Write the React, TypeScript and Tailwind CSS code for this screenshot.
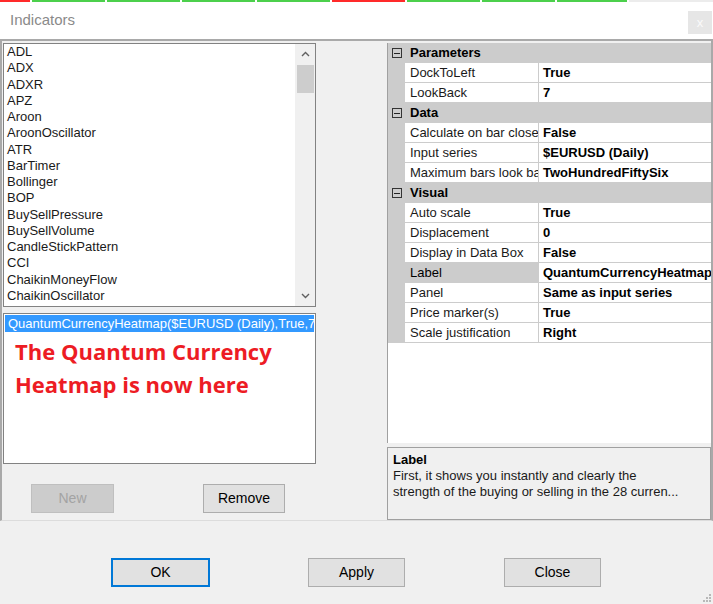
import React from "react";

const indicators = [
  "ADL",
  "ADX",
  "ADXR",
  "APZ",
  "Aroon",
  "AroonOscillator",
  "ATR",
  "BarTimer",
  "Bollinger",
  "BOP",
  "BuySellPressure",
  "BuySellVolume",
  "CandleStickPattern",
  "CCI",
  "ChaikinMoneyFlow",
  "ChaikinOscillator",
];

const sections: { title: string; rows: [string, string][] }[] = [
  {
    title: "Parameters",
    rows: [
      ["DockToLeft", "True"],
      ["LookBack", "7"],
    ],
  },
  {
    title: "Data",
    rows: [
      ["Calculate on bar close", "False"],
      ["Input series", "$EURUSD (Daily)"],
      ["Maximum bars look back", "TwoHundredFiftySix"],
    ],
  },
  {
    title: "Visual",
    rows: [
      ["Auto scale", "True"],
      ["Displacement", "0"],
      ["Display in Data Box", "False"],
      ["Label", "QuantumCurrencyHeatmap"],
      ["Panel", "Same as input series"],
      ["Price marker(s)", "True"],
      ["Scale justification", "Right"],
    ],
  },
];

// chart strip peeking above the dialog
const strip = [
  "w-[30px] bg-[#ff2a2a]",
  "w-[73px] bg-[#4cd04c]",
  "w-[73px] bg-[#4cd04c]",
  "w-[73px] bg-[#4cd04c]",
  "w-[73px] bg-[#4cd04c]",
  "w-[73px] bg-[#ff2a2a]",
  "w-[73px] bg-[#4cd04c]",
  "w-[73px] bg-[#4cd04c]",
  "w-[70px] bg-[#4cd04c]",
];

const Chevron = ({ up }: { up?: boolean }) => (
  <svg width="9" height="6" viewBox="0 0 9 6">
    <path
      d={up ? "M1 5 L4.5 1.5 L8 5" : "M1 1 L4.5 4.5 L8 1"}
      fill="none"
      stroke="#606060"
      strokeWidth="1.4"
    />
  </svg>
);

const MinusBox = () => (
  <div className="w-[10px] h-[10px] border border-[#333] flex items-center justify-center">
    <div className="w-[6px] h-px bg-[#222]" />
  </div>
);

const WinButton = ({
  label,
  disabled,
  focused,
  className = "",
}: {
  label: string;
  disabled?: boolean;
  focused?: boolean;
  className?: string;
}) => (
  <button
    type="button"
    className={`h-[29px] flex items-center justify-center text-[14px] ${
      disabled
        ? "bg-[#cccccc] border border-[#bfbfbf] text-[#a3a3a3]"
        : focused
        ? "bg-[#e1e1e1] border-2 border-[#0078d7] text-black"
        : "bg-[#e1e1e1] border border-[#adadad] text-black"
    } ${className}`}
  >
    {label}
  </button>
);

export default function App() {
  return (
    <div className="w-[713px] h-[604px] bg-white overflow-hidden font-['Liberation_Sans',Arial,sans-serif] text-[13px] text-[#1a1a1a]">
      <div className="flex h-[2px] gap-[2px]">
        {strip.map((c, i) => (
          <div key={i} className={c} />
        ))}
        <div className="flex-1 bg-[#ececec]" />
      </div>

      <div className="h-[37px] flex items-start justify-between pl-[10px]">
        <span className="mt-[7px] text-[15px] text-[#8a8a8a]">Indicators</span>
        <div className="mt-[9px] mr-[1px] w-[24px] h-[23px] bg-[#e6e6e6] flex items-center justify-center text-[13px] text-[#fafafa]">
          x
        </div>
      </div>

      <div className="h-[482px] flex bg-[#f0f0f0] border-t-2 border-l-2 border-r-2 border-[#a9a9a9] border-b border-b-[#dcdcdc]">
        <div className="ml-[1px] w-[313px] flex flex-col pt-[2px]">
          <div className="h-[264px] border border-[#828282] bg-white flex">
            <div className="flex-1 pl-[3px] leading-[16.25px] overflow-hidden">
              {indicators.map((n) => (
                <div key={n} className="whitespace-nowrap">
                  {n}
                </div>
              ))}
            </div>
            <div className="w-[20px] bg-[#f0f0f0] flex flex-col items-center">
              <div className="h-[20px] flex items-center justify-center">
                <Chevron up />
              </div>
              <div className="mt-[1px] w-[17px] h-[28px] bg-[#cdcdcd]" />
              <div className="flex-1" />
              <div className="h-[20px] flex items-center justify-center">
                <Chevron />
              </div>
            </div>
          </div>

          <div className="mt-[6px] h-[151px] border border-[#828282] bg-white p-px overflow-hidden">
            <div className="h-[17px] bg-[#3399ff] text-white whitespace-nowrap overflow-hidden pl-[3px] leading-[17px]">
              QuantumCurrencyHeatmap($EURUSD (Daily),True,7)
            </div>
            <div className="mt-[3px] pl-[10px] font-['Open_Sans',sans-serif] font-bold text-[22px] leading-[33px] text-[#ed1c24]">
              The Quantum Currency
              <br />
              Heatmap is now here
            </div>
          </div>

          <div className="mt-[20px] flex">
            <WinButton label="New" disabled className="ml-[28px] w-[83px] h-[28px]" />
            <WinButton label="Remove" className="ml-[89px] w-[82px] h-[28px]" />
          </div>
        </div>

        <div className="ml-[71px] w-[324px] flex flex-col pt-[2px]">
          <div className="h-[400px] border-l border-[#a0a0a0] bg-white overflow-hidden">
            {sections.map((s) => (
              <div key={s.title}>
                <div className="h-[20px] bg-[#cccccc] flex items-center">
                  <div className="ml-[4px]">
                    <MinusBox />
                  </div>
                  <span className="ml-[8px] font-bold text-black">{s.title}</span>
                </div>
                {s.rows.map(([name, value]) => (
                  <div key={name} className="h-[20px] flex bg-[#cccccc]">
                    <div
                      className={`ml-[17px] w-[133px] mb-px whitespace-nowrap overflow-hidden pl-[5px] leading-[19px] ${
                        name === "Label" ? "bg-[#cccccc] text-black" : "bg-white"
                      }`}
                    >
                      {name}
                    </div>
                    <div className="ml-px flex-1 mb-px bg-white whitespace-nowrap overflow-hidden pl-[4px] leading-[19px] font-bold text-black">
                      {value}
                    </div>
                  </div>
                ))}
              </div>
            ))}
          </div>

          <div className="mt-[4px] h-[73px] border border-[#a0a0a0] bg-[#f0f0f0] px-[5px] pt-[4px] leading-[16px]">
            <div className="font-bold text-black">Label</div>
            <div className="whitespace-nowrap overflow-hidden">
              First, it shows you instantly and clearly the
            </div>
            <div className="whitespace-nowrap overflow-hidden">
              strength of the buying or selling in the 28 curren...
            </div>
          </div>
        </div>
      </div>

      <div className="h-[83px] bg-[#f0f0f0] flex items-start pt-[37px] relative">
        <WinButton label="OK" focused className="ml-[111px] w-[99px]" />
        <WinButton label="Apply" className="ml-[98px] w-[97px]" />
        <WinButton label="Close" className="ml-[99px] w-[97px]" />
        <svg className="absolute right-[2px] bottom-[2px]" width="8" height="8" viewBox="0 0 8 8">
          <rect x="6" y="0" width="2" height="2" fill="#b8b8b8" />
          <rect x="3" y="3" width="2" height="2" fill="#b8b8b8" />
          <rect x="6" y="3" width="2" height="2" fill="#b8b8b8" />
          <rect x="0" y="6" width="2" height="2" fill="#b8b8b8" />
          <rect x="3" y="6" width="2" height="2" fill="#b8b8b8" />
          <rect x="6" y="6" width="2" height="2" fill="#b8b8b8" />
        </svg>
      </div>
    </div>
  );
}
